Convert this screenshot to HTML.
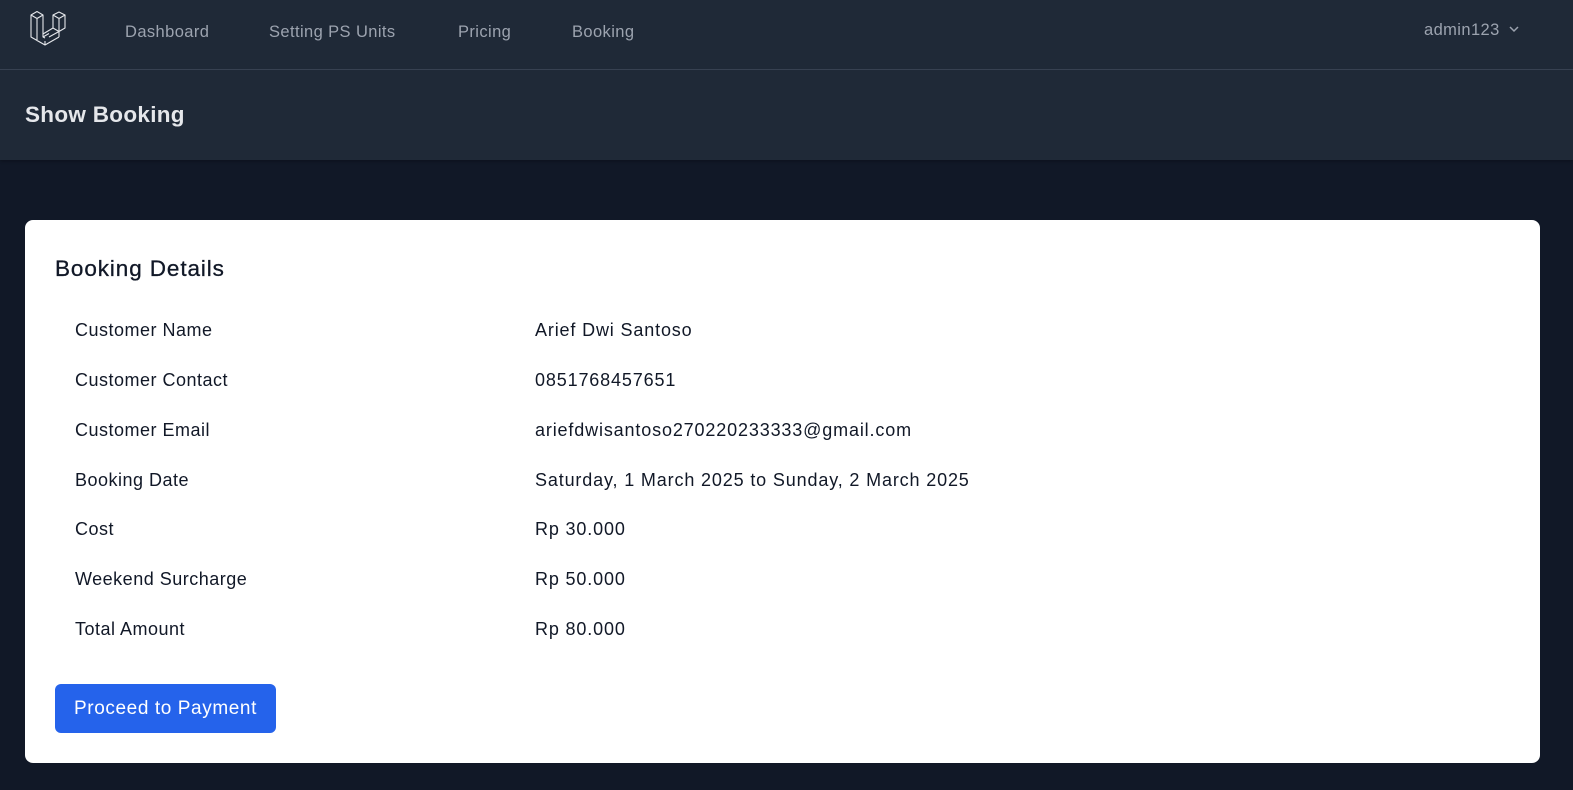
<!DOCTYPE html>
<html><head><style>
*{margin:0;padding:0;box-sizing:border-box}
body{width:1573px;height:790px;background:#111827;font-family:"Liberation Sans",sans-serif;overflow:hidden}
nav{height:70px;background:#1f2937;border-bottom:1px solid #374151;position:relative}
nav a{position:absolute;top:23px;color:#9ca3af;font-size:16.5px;letter-spacing:0.4px;text-decoration:none}
header{height:90px;background:#1f2937;box-shadow:0 1px 3px rgba(0,0,0,.3)}
header h2{color:#e5e7eb;font-size:22.5px;font-weight:bold;padding:32px 0 0 25px;letter-spacing:0.3px}
.card{position:absolute;left:25px;top:220px;width:1515px;height:543px;background:#fff;border-radius:8px}
.card h3{position:absolute;left:30px;top:36px;font-size:22.5px;font-weight:normal;color:#111827;letter-spacing:0.9px;-webkit-text-stroke:0.3px #111827}
.row{position:absolute;left:50px;font-size:18px;color:#111827;letter-spacing:0.5px}
.val{position:absolute;left:510px;font-size:18px;color:#111827;letter-spacing:0.85px}
.btn{position:absolute;left:30px;top:464px;width:221px;height:49px;background:#2563eb;border-radius:6px;color:#fff;font-size:19px;letter-spacing:0.6px;line-height:49px;text-align:center}
</style></head><body>
<nav>
<svg style="position:absolute;left:29px;top:9px" width="41" height="41" viewBox="0 0 41 41" fill="none" stroke="#e5e7eb" stroke-width="1.1" stroke-linejoin="round">
<path d="M2 6 L8 2.5 L14 6 L8 9.5 Z M2 6 V28 L16 36 L30 28 M8 9.5 V31.5 M14 6 V28 L20 24.5 M16 36 V32 M8 31.5 L16 36 M14 28 L16 29 M24 6 L30 3 L36 6 L30 9.5 Z M24 6 V19 L30 22.5 L36 19 V6 M30 9.5 V22.5 M30 22.5 V28 M24 19 L14 25 M30 22.5 L20 28"/>
</svg>
<a style="left:125px">Dashboard</a>
<a style="left:269px">Setting PS Units</a>
<a style="left:458px">Pricing</a>
<a style="left:572px">Booking</a>
<a style="left:1424px;top:21px">admin123</a>
<svg style="position:absolute;left:1509px;top:25px" width="10" height="8" viewBox="0 0 10 8"><path d="M1 2 L5 6 L9 2" stroke="#9ca3af" stroke-width="1.5" fill="none"/></svg>
</nav>
<header><h2>Show Booking</h2></header>
<div class="card">
<h3>Booking Details</h3>
<div class="row" style="top:100px">Customer Name</div><div class="val" style="top:100px">Arief Dwi Santoso</div>
<div class="row" style="top:150px">Customer Contact</div><div class="val" style="top:150px">0851768457651</div>
<div class="row" style="top:200px">Customer Email</div><div class="val" style="top:200px">ariefdwisantoso270220233333@gmail.com</div>
<div class="row" style="top:250px">Booking Date</div><div class="val" style="top:250px">Saturday, 1 March 2025 to Sunday, 2 March 2025</div>
<div class="row" style="top:299px">Cost</div><div class="val" style="top:299px">Rp 30.000</div>
<div class="row" style="top:349px">Weekend Surcharge</div><div class="val" style="top:349px">Rp 50.000</div>
<div class="row" style="top:399px">Total Amount</div><div class="val" style="top:399px">Rp 80.000</div>
<div class="btn">Proceed to Payment</div>
</div>
</body></html>
